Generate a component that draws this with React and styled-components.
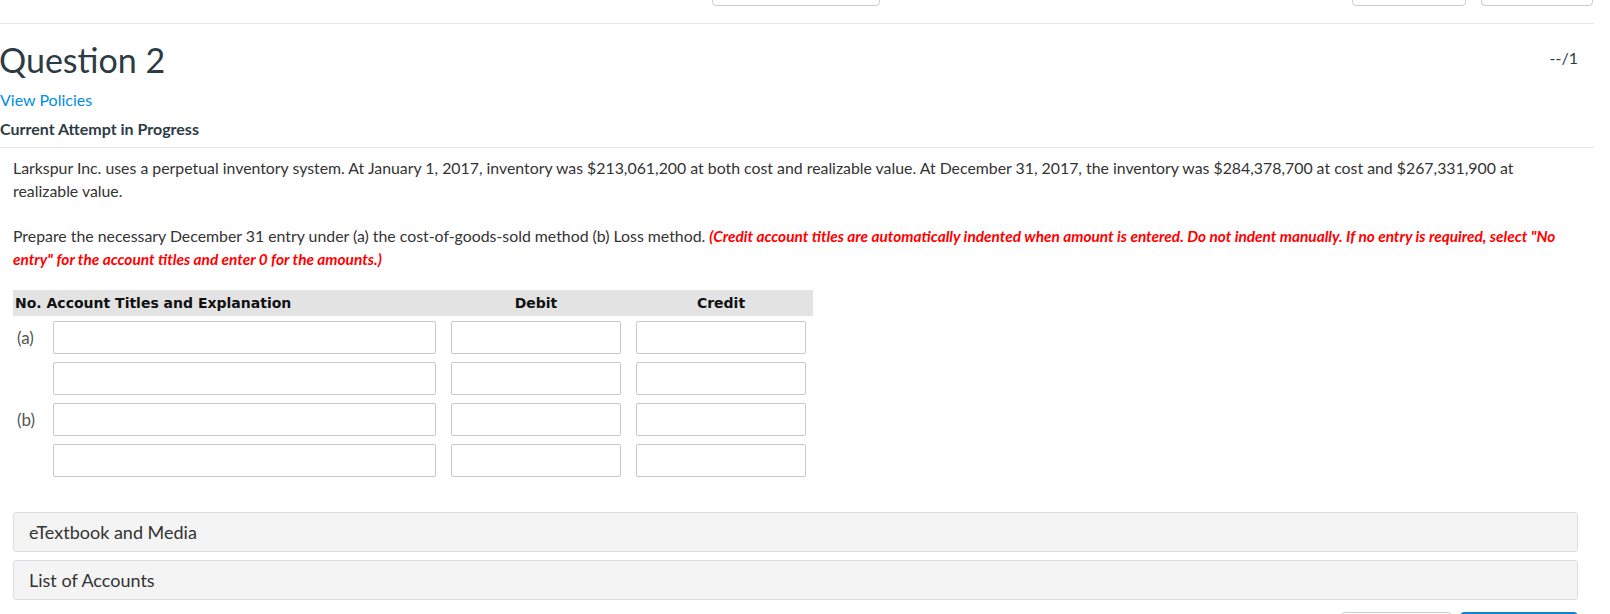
import React from "react";
import styled, { createGlobalStyle } from "styled-components";

const GlobalStyle = createGlobalStyle`
  body {
    margin: 0;
    background: #fff;
    font-family: Lato, "Open Sans", sans-serif;
    color: #333;
  }
`;

const Page = styled.div`
  width: 1594px;
`;

const TopBar = styled.div`
  height: 23px;
  border-bottom: 1px solid #e6e6e6;
  display: flex;
  align-items: flex-end;
  padding-left: 712px;
  overflow: hidden;
`;

const NavButton = styled.div`
  flex: none;
  width: ${(p) => p.w}px;
  height: 30px;
  margin-bottom: 17px;
  margin-left: ${(p) => p.ml || 0};
  margin-right: ${(p) => p.mr || 0}px;
  border: 1px solid #c7cdd1;
  border-radius: 4px;
  box-sizing: border-box;
`;

const Header = styled.div`
  display: flex;
  justify-content: space-between;
  border-bottom: 1px solid #e6e6e6;
  padding: 14px 16px 8px 0;
`;

const HeaderLeft = styled.div`
  display: flex;
  flex-direction: column;
`;

const Title = styled.h2`
  margin: 0 0 0 -1px;
  font-size: 34px;
  font-weight: 400;
  line-height: 43px;
  color: #2d3b45;
`;

const PolicyLink = styled.a`
  margin-top: 9px;
  font-size: 16px;
  line-height: 20px;
  color: #008ee2;
  text-decoration: none;
`;

const Attempt = styled.div`
  margin-top: 9px;
  font-size: 16px;
  font-weight: 700;
  line-height: 20px;
  color: #2d3b45;
`;

const Points = styled.div`
  margin-top: 10px;
  font-size: 16px;
  color: #2d3b45;
`;

const Body = styled.div`
  padding: 8px 16px 0 13px;
`;

const Para = styled.p`
  margin: 0 0 ${(p) => p.mb}px;
  font-size: 15.85px;
  line-height: 23px;
  color: #333;
`;

const Warning = styled.span`
  color: #f00;
  font-size: 15.4px;
  font-weight: 700;
  font-style: italic;
  line-height: 22px;
`;

const cols = "25px 383px 170px 170px";

const Journal = styled.div`
  width: 800px;
  display: grid;
  grid-template-columns: ${cols};
  column-gap: 15px;
  row-gap: 8px;
`;

const HeadRow = styled.div`
  grid-column: 1 / -1;
  display: grid;
  grid-template-columns: ${cols};
  column-gap: 15px;
  height: 26px;
  align-items: center;
  background: #e3e3e3;
  margin: 0 -7px -3px 0;
  font-family: "DejaVu Sans", Verdana, sans-serif;
  font-size: 14px;
  font-weight: 700;
  color: #111;
`;

const HeadCell = styled.div`
  text-align: ${(p) => p.align || "center"};
  padding-left: ${(p) => p.pl || 0}px;
  white-space: nowrap;
  grid-column: ${(p) => p.span || "auto"};
`;

const RowLabel = styled.div`
  font-size: 17px;
  color: #555;
  padding-left: 4px;
  align-self: center;
  white-space: nowrap;
`;

const Field = styled.input`
  height: 33px;
  box-sizing: border-box;
  border: 1px solid #c8c8c8;
  border-radius: 2px;
  background: #fff;
  font: inherit;
  padding: 0 6px;
`;

const Panels = styled.div`
  display: flex;
  flex-direction: column;
  gap: 8px;
  margin-top: 35px;
`;

const Panel = styled.div`
  height: 40px;
  box-sizing: border-box;
  border: 1px solid #ddd;
  border-radius: 3px;
  background: #f4f4f4;
  display: flex;
  align-items: center;
  padding-left: 15px;
  font-size: 18px;
  color: #333;
`;

const Footer = styled.div`
  display: flex;
  justify-content: flex-end;
  gap: 8px;
  margin-top: 12px;
`;

const FootButton = styled.div`
  width: ${(p) => p.w}px;
  height: 36px;
  box-sizing: border-box;
  border-radius: 4px;
  border: 1px solid ${(p) => (p.primary ? "#0b84d0" : "#c7cdd1")};
  background: ${(p) => (p.primary ? "#0b84d0" : "#fff")};
`;

const rows = [
  { label: "(a)" },
  { label: "" },
  { label: "(b)" },
  { label: "" },
];

export default function App() {
  return (
    <>
      <GlobalStyle />
      <Page>
        <TopBar>
          <NavButton w={168} />
          <NavButton w={114} ml="auto" />
          <NavButton w={112} ml="15px" mr={1} />
        </TopBar>
        <Header>
          <HeaderLeft>
            <Title>Question 2</Title>
            <PolicyLink href="#">View Policies</PolicyLink>
            <Attempt>Current Attempt in Progress</Attempt>
          </HeaderLeft>
          <Points>--/1</Points>
        </Header>
        <Body>
          <Para mb={22}>
            Larkspur Inc. uses a perpetual inventory system. At January 1, 2017,
            inventory was $213,061,200 at both cost and realizable value. At
            December 31, 2017, the inventory was $284,378,700 at cost and
            $267,331,900 at realizable value.
          </Para>
          <Para mb={20}>
            Prepare the necessary December 31 entry under (a) the
            cost-of-goods-sold method (b) Loss method.{" "}
            <Warning>
              (Credit account titles are automatically indented when amount is
              entered. Do not indent manually. If no entry is required, select
              "No entry" for the account titles and enter 0 for the amounts.)
            </Warning>
          </Para>
          <Journal>
            <HeadRow>
              <HeadCell align="left" pl={2} span="1 / 3">
                No. Account Titles and Explanation
              </HeadCell>
              <HeadCell>Debit</HeadCell>
              <HeadCell>Credit</HeadCell>
            </HeadRow>
            {rows.map((r, i) => (
              <React.Fragment key={i}>
                <RowLabel>{r.label}</RowLabel>
                <Field />
                <Field />
                <Field />
              </React.Fragment>
            ))}
          </Journal>
          <Panels>
            <Panel>eTextbook and Media</Panel>
            <Panel>List of Accounts</Panel>
          </Panels>
          <Footer>
            <FootButton w={111} />
            <FootButton w={118} primary />
          </Footer>
        </Body>
      </Page>
    </>
  );
}
